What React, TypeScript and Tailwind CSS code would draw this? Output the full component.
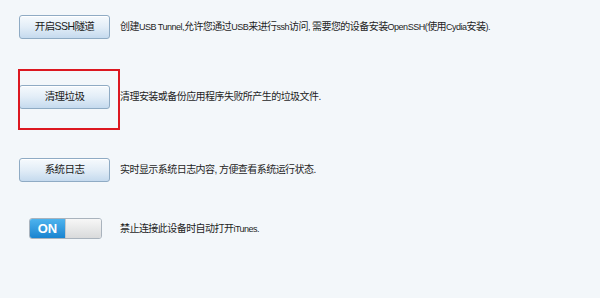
import React from 'react'

const font = { fontFamily: '"Liberation Sans", "Noto Sans CJK SC", sans-serif' }

function Btn({ label }: { label: string }) {
  return (
    <button className="w-[91px] h-[24px] shrink-0 rounded-[3px] border border-[#8fabc4] bg-gradient-to-b from-[#f6fafd] via-[#e2edf7] to-[#c5daee] text-[10.5px] tracking-[-0.6px] text-[#1a1a1a] shadow-[inset_0_1px_0_#ffffff] flex items-center justify-center">
      {label}
    </button>
  )
}

function Desc({ children }: { children: React.ReactNode }) {
  return <p className="text-[10px] tracking-[-0.55px] text-[#1e1e1e] leading-none">{children}</p>
}

// latin runs in the original are drawn in a smaller, tighter face
function L({ children }: { children: React.ReactNode }) {
  return <span className="text-[9px] tracking-[-0.5px]">{children}</span>
}

export default function App() {
  return (
    <main className="w-[600px] h-[298px] bg-[#f3f7fa] overflow-hidden" style={font}>
      <div className="pl-[19px] pt-[15px] flex flex-col">
        {/* SSH */}
        <div className="flex items-center gap-[10px] h-[24px]">
          <Btn label="开启SSH隧道" />
          <Desc>
            创建<L>USB Tunnel,</L>允许您通过<L>USB</L>来进行<L>ssh</L>访问<L>, </L>需要您的设备安装<L>OpenSSH(</L>使用<L>Cydia</L>安装<L>).</L>
          </Desc>
        </div>

        {/* 清理垃圾 */}
        <div className="relative flex items-center gap-[10px] h-[24px] mt-[46px]">
          <Btn label="清理垃圾" />
          <Desc>清理安装或备份应用程序失败所产生的垃圾文件.</Desc>
          <div className="absolute left-[-1px] top-[-16px] w-[102px] h-[61px] border-2 border-[#dc1820] pointer-events-none" />
        </div>

        {/* 系统日志 */}
        <div className="flex items-center gap-[10px] h-[24px] mt-[49px]">
          <Btn label="系统日志" />
          <Desc>实时显示系统日志内容, 方便查看系统运行状态.</Desc>
        </div>

        {/* iTunes toggle */}
        <div className="flex items-center h-[21px] mt-[36px]">
          <div className="ml-[10px] w-[73px] h-[21px] rounded-[3px] border border-[#a9b3bd] flex overflow-hidden shrink-0">
            <div className="w-[35px] bg-gradient-to-b from-[#4db3ee] to-[#1784d0] text-white text-[13px] font-bold flex items-center justify-center">
              ON
            </div>
            <div className="flex-1 bg-gradient-to-b from-[#f7f7f7] to-[#d9dadb] border-l border-[#c4c8cc]" />
          </div>
          <div className="ml-[18px]">
            <Desc>
              禁止连接此设备时自动打开<L>iTunes.</L>
            </Desc>
          </div>
        </div>
      </div>
    </main>
  )
}
